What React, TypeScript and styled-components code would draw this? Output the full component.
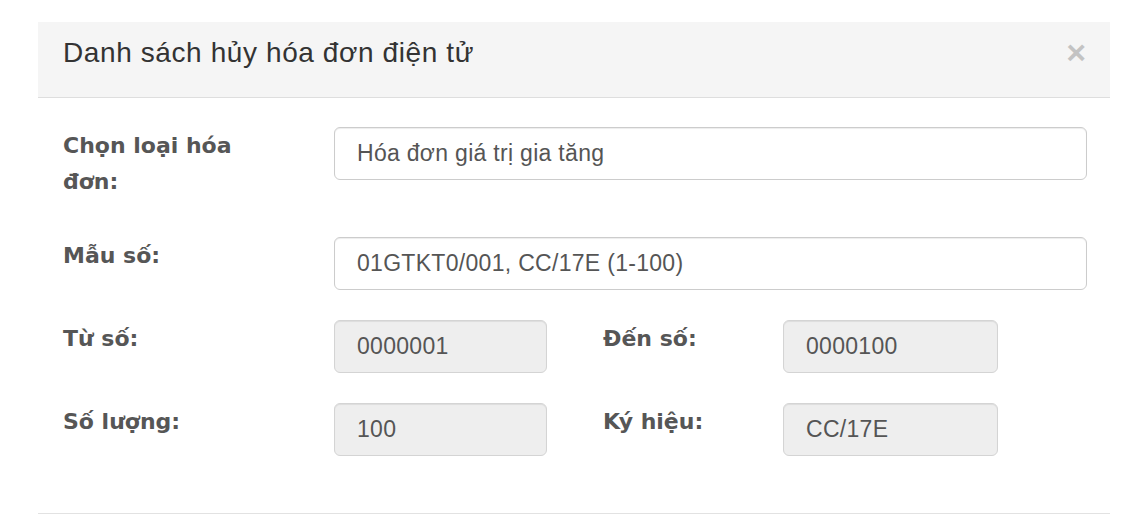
import * as React from "react";
import styled, { createGlobalStyle } from "styled-components";

const GlobalStyle = createGlobalStyle`
  html, body {
    margin: 0;
    padding: 0;
    background: #fff;
  }
  body {
    font-family: "Liberation Sans", Arial, sans-serif;
    color: #333;
  }
  * {
    box-sizing: border-box;
  }
`;

export default function App() {
  return (
    <React.Fragment>
      <GlobalStyle />
      <Modal>
        <Header>
          <Title>Danh sách hủy hóa đơn điện tử</Title>
          <Close type="button" aria-label="Close">
            ×
          </Close>
        </Header>
        <Body>
          <Row>
            <Label $bottom={7}>Chọn loại hóa đơn:</Label>
            <Input readOnly value="Hóa đơn giá trị gia tăng" />
          </Row>
          <Row>
            <Label>Mẫu số:</Label>
            <Input readOnly value="01GTKT0/001, CC/17E (1-100)" />
          </Row>
          <PairRow>
            <Label>Từ số:</Label>
            <Input readOnly disabled value="0000001" />
            <SubLabel>Đến số:</SubLabel>
            <Input readOnly disabled value="0000100" />
          </PairRow>
          <PairRow>
            <Label>Số lượng:</Label>
            <Input readOnly disabled value="100" />
            <SubLabel>Ký hiệu:</SubLabel>
            <Input readOnly disabled value="CC/17E" />
          </PairRow>
        </Body>
        <Footer />
      </Modal>
    </React.Fragment>
  );
}

const Modal = styled.div`
  width: 1072px;
  margin: 22px 0 0 38px;
  background: #fff;
`;

const Header = styled.div`
  display: flex;
  justify-content: space-between;
  align-items: flex-start;
  height: 76px;
  padding: 12px 24px 0 25px;
  background-color: #f5f5f5;
  border-bottom: 1px solid #dedede;
`;

const Title = styled.h4`
  margin: 0;
  font-family: "Liberation Sans", Arial, sans-serif;
  font-size: 28px;
  font-weight: normal;
  letter-spacing: 0.6px;
  line-height: 38px;
  color: #333;
`;

const Close = styled.button`
  margin-top: 1px;
  padding: 0;
  border: 0;
  background: transparent;
  font-family: "Liberation Sans", Arial, sans-serif;
  font-size: 34px;
  font-weight: bold;
  line-height: 1;
  color: #000;
  opacity: 0.2;
  cursor: pointer;
`;

const Body = styled.div`
  display: flex;
  flex-direction: column;
  gap: 30px;
  padding: 29px 23px 57px 25px;
`;

const Row = styled.div`
  display: grid;
  grid-template-columns: 271px 1fr;
  align-items: start;
`;

const PairRow = styled.div`
  display: grid;
  grid-template-columns: 271px 213px 236px 215px;
  align-items: start;
`;

const Label = styled.label<{ $bottom?: number }>`
  display: block;
  padding: 1px 60px ${(p) => p.$bottom ?? 0}px 0;
  font-family: "DejaVu Sans", Verdana, sans-serif;
  font-size: 22px;
  font-weight: bold;
  line-height: 36px;
  color: #565656;
`;

const SubLabel = styled(Label)`
  padding-left: 56px;
  padding-right: 0;
`;

const Input = styled.input`
  display: block;
  width: 100%;
  height: 53px;
  padding: 0 22px;
  border: 1px solid #cccccc;
  border-radius: 6px;
  background-color: #fff;
  box-shadow: inset 0 1px 1px rgba(0, 0, 0, 0.075);
  font-family: "Liberation Sans", Arial, sans-serif;
  font-size: 23px;
  letter-spacing: 0.3px;
  color: #555;
  outline: none;

  &:disabled {
    background-color: #eeeeee;
    border-color: #d4d4d4;
    color: #555;
    opacity: 1;
    -webkit-text-fill-color: #555;
  }
`;

const Footer = styled.div`
  height: 15px;
  border-top: 1px solid #e2e2e2;
`;
